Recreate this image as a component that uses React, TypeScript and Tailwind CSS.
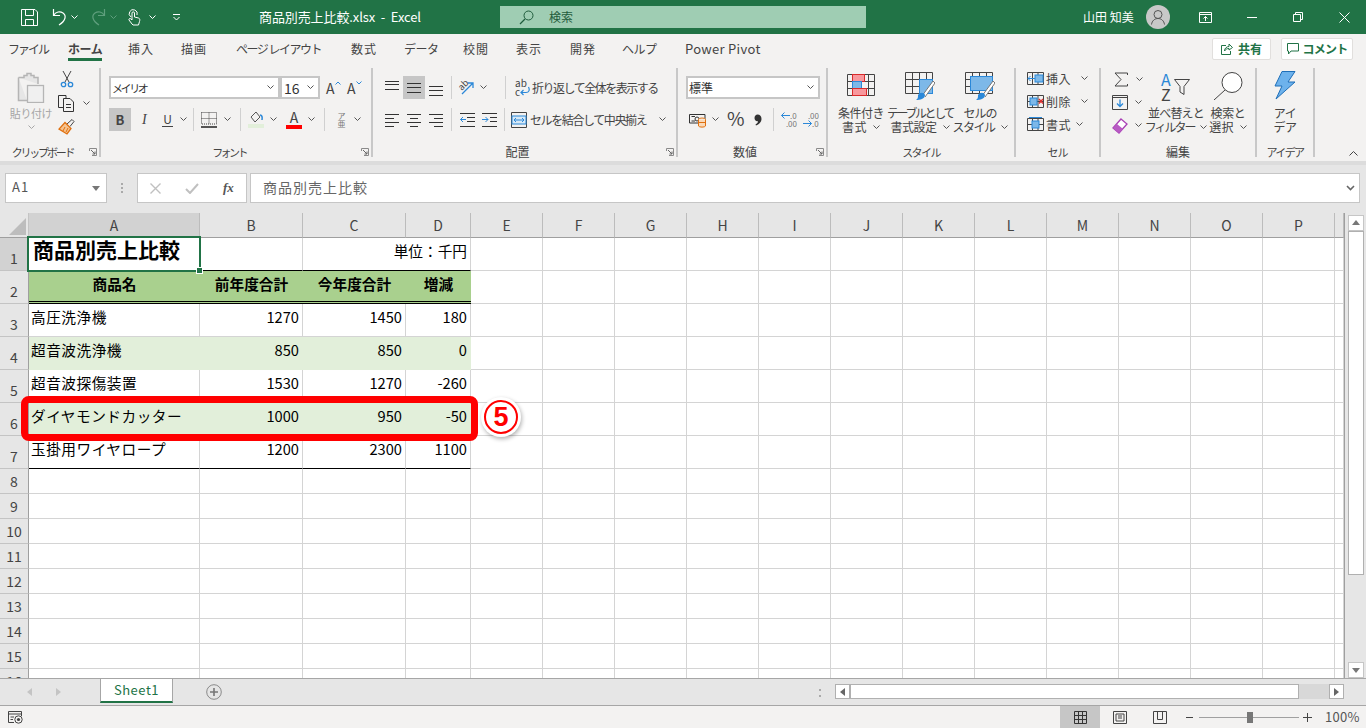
import React from "react";

type P = { className?: string };
const S = ({ w, h, className, children }: { w: number; h: number; className?: string; children: React.ReactNode }) => (
  <svg width={w} height={h} viewBox={`0 0 ${w} ${h}`} fill="none" className={`block shrink-0 ${className ?? ""}`}>
    {children}
  </svg>
);
const B = "#2b88d8";

const Chev = ({ className, color = "#555555" }: P & { color?: string }) => (
  <S w={7} h={5} className={className}>
    <path d="M0.5 0.5 L3.5 3.5 L6.5 0.5" stroke={color} />
  </S>
);

const Lines = ({ ys }: { ys: [number, number, number][] }) => (
  <S w={15} h={16}>
    {ys.map(([y, a, b], i) => (
      <path key={i} d={`M${a} ${y + 0.5} H${b}`} stroke="#333333" />
    ))}
  </S>
);

const Group = ({ className, label, labelClass, launcher, children }: { className: string; label: string; labelClass: string; launcher?: boolean; children: React.ReactNode }) => (
  <div className={`relative mt-[4px] flex h-[89px] shrink-0 flex-col border-r-2 border-[#c8c8c8] ${className}`}>
    <div className="h-[76px]">{children}</div>
    <div className={`h-[13px] text-center leading-[16px] text-[#444444] ${labelClass} ${launcher ? "pr-[14px]" : ""}`}>{label}</div>
    {launcher && (
      <div className="absolute bottom-[1px] right-[2px]">
        <S w={8} h={8}>
          <path d="M0.5 3 V0.5 H7.5 V7.5 H3" stroke="#8a8a8a" />
          <path d="M2 2 L6 6 M6 3.5 V6 H3.5" stroke="#666666" />
        </S>
      </div>
    )}
  </div>
);

const BigText = ({ a, b, ca, cb, chev = true }: { a: string; b: string; ca?: string; cb?: string; chev?: boolean }) => (
  <div className="mt-[6px] flex flex-col items-center text-[12px] leading-[14px] text-[#444444]">
    <div className={`whitespace-nowrap ${ca ?? ""}`}>{a}</div>
    <div className="flex items-center whitespace-nowrap">
      <span className={cb ?? ""}>{b}</span>
      {chev && <Chev className="ml-[6px]" />}
    </div>
  </div>
);

const tabs: [string, string][] = [
  ["ファイル", "w-[60px] tracking-[-2px]"],
  ["ホーム", "w-[60px] font-bold tracking-[-0.5px] text-[#217346]"],
  ["挿入", "w-[53px] tracking-[1px]"],
  ["描画", "w-[55px] tracking-[1px]"],
  ["ページ レイアウト", "w-[115px] tracking-[-1.5px]"],
  ["数式", "w-[53px] tracking-[1px]"],
  ["データ", "w-[59px] tracking-[-0.5px]"],
  ["校閲", "w-[53px] tracking-[1px]"],
  ["表示", "w-[54px] tracking-[1px]"],
  ["開発", "w-[52px] tracking-[1px]"],
  ["ヘルプ", "w-[63px] tracking-[-0.5px]"],
  ["Power Pivot", "w-[80px] tracking-[0.3px] text-[13px]"],
];

function TitleBar() {
  return (
    <div className="flex h-[34px] items-center bg-[#217346] text-white">
      <S w={17} h={17} className="ml-[21px]">
        <path d="M0.5 0.5 H14 L16.5 3 V16.5 H0.5 Z M4.5 0.5 V6.5 H12.5 V0.5 M4.5 16.5 V10.5 H12.5 V16.5" stroke="#fff" />
      </S>
      <S w={17} h={18} className="ml-[13px]">
        <path d="M2.5 1 V7.5 H9 M2.5 7.5 C5 3.5 9 3 12 5 C15.5 7.5 15 12.5 8 17" stroke="#fff" strokeWidth="1.2" />
      </S>
      <Chev className="ml-[3px]" color="#fff" />
      <S w={17} h={18} className="ml-[12px]">
        <path d="M14.5 1 V7.5 H8 M14.5 7.5 C12 3.5 8 3 5 5 C1.5 7.5 2 12.5 9 17" stroke="#5f9f7d" strokeWidth="1.2" />
      </S>
      <Chev className="ml-[3px]" color="#5f9f7d" />
      <S w={14} h={18} className="ml-[10px]">
        <path d="M4 9 A4 4 0 1 1 10 7 M5 16 L2 12 C1.5 10.5 3 10 4 11 L5 12 V5 C5 3.5 7.5 3.5 7.5 5 V9 L11.5 10 C13 10.5 13 12 12.5 13.5 L11.5 17 H6 Z" stroke="#fff" />
      </S>
      <Chev className="ml-[8px]" color="#fff" />
      <S w={7} h={7} className="ml-[17px]">
        <path d="M0 0.5 H7 M0.5 3 L3.5 6 L6.5 3" stroke="#fff" />
      </S>
      <div className="ml-[79px] w-[241px] whitespace-pre text-[13px] leading-[18px] tracking-[-0.1px]">商品別売上比較.xlsx  -  Excel</div>
      <div className="flex h-[22px] w-[366px] items-center bg-[#9fcdb3] text-[#1f5c3c]">
        <S w={15} h={15} className="ml-[19px]">
          <circle cx="9.5" cy="5.5" r="4.5" stroke="#1f5c3c" />
          <path d="M6 9 L1 14" stroke="#1f5c3c" strokeWidth="1.2" />
        </S>
        <span className="ml-[15px] text-[12px] leading-[16px]">検索</span>
      </div>
      <div className="ml-[217px] w-[63px] whitespace-pre text-[12px] leading-[16px]">山田 知美</div>
      <div className="flex h-[24px] w-[24px] items-center justify-center rounded-full bg-[#c8c8c8]">
        <S w={16} h={16}>
          <circle cx="8" cy="5.5" r="4" stroke="#555" />
          <path d="M1.5 15.5 C2 11.5 5 9.5 8 9.5 C11 9.5 14 11.5 14.5 15.5" stroke="#555" />
        </S>
      </div>
      <S w={13} h={11} className="ml-[29px]">
        <path d="M0.5 0.5 H12.5 V10.5 H0.5 Z M0.5 2.5 H12.5 M6.5 9 V4.5 M4.5 6.5 L6.5 4.5 L8.5 6.5" stroke="#fff" />
      </S>
      <S w={10} h={1} className="ml-[35px]">
        <path d="M0 0.5 H10" stroke="#fff" />
      </S>
      <S w={10} h={10} className="ml-[36px]">
        <path d="M0.5 2.5 H7.5 V9.5 H0.5 Z M2.5 2.5 V0.5 H9.5 V7.5 H7.5" stroke="#fff" />
      </S>
      <S w={11} h={11} className="ml-[36px]">
        <path d="M0.5 0.5 L10.5 10.5 M10.5 0.5 L0.5 10.5" stroke="#fff" />
      </S>
    </div>
  );
}

function TabRow() {
  return (
    <div className="flex h-[30px] items-start bg-[#f3f2f1] pl-[8px]">
      {tabs.map(([t, c]) => (
        <div key={t} className={`h-[27px] whitespace-pre pt-[7px] text-[12px] leading-[16px] text-[#444444] ${c}`}>
          {t === "ホーム" ? (
            <span className="inline-block h-[20px] w-[34px] border-b-[3px] border-[#217346]">{t}</span>
          ) : (
            t
          )}
        </div>
      ))}
      <div className="ml-auto mr-[13px] mt-[4px] flex gap-[10px]">
        <div className="flex h-[22px] w-[59px] items-center justify-center gap-[5px] rounded-[2px] border border-[#e1dfdd] bg-white text-[12px] font-bold leading-[16px] text-[#217346]">
          <S w={12} h={12}>
            <path d="M5 2.5 H0.5 V11.5 H9.5 V8 M3.5 8 C3.5 5 6 3.5 8 3.5 V1 L11.5 4.5 L8 7 V5.5 C6 5.5 5 6 3.5 8 Z" stroke="#217346" />
          </S>
          共有
        </div>
        <div className="flex h-[22px] w-[72px] items-center justify-center gap-[4px] rounded-[2px] border border-[#e1dfdd] bg-white text-[12px] font-bold leading-[16px] tracking-[-0.8px] text-[#217346]">
          <S w={12} h={12}>
            <path d="M0.5 0.5 H11.5 V8 H4 L1.5 11 V8 H0.5 Z" stroke="#217346" />
          </S>
          コメント
        </div>
      </div>
    </div>
  );
}

const Combo = ({ text, className }: { text: string; className: string }) => (
  <div className={`flex h-[23px] items-center justify-between border-2 border-[#c6c6c6] bg-white pl-[1px] pr-[4px] leading-[16px] text-[#333333] ${className}`}>
    <span>{text}</span>
    <Chev />
  </div>
);

const Sep = ({ className }: P) => <div className={`h-[23px] w-[1px] bg-[#d0d0d0] ${className ?? ""}`} />;

function Clipboard() {
  return (
    <div className="flex">
      <div className="ml-[6px] flex w-[50px] flex-col items-center">
        <S w={28} h={31} className="mt-[4px]">
          <path d="M1.5 5.5 H7 V3.5 H10 V1.5 H14 V3.5 H17 V5.5 H21 V12 M1.5 5.5 V28.5 H10" stroke="#b5b5b5" strokeWidth="1.5" fill="#e6e6e6" />
          <rect x="10.5" y="13.5" width="16" height="17" fill="#f0f0f0" stroke="#b5b5b5" strokeWidth="1.3" />
        </S>
        <div className="mt-[2px] whitespace-nowrap text-[11px] leading-[16px] tracking-[-0.4px] text-[#a6a6a6]">貼り付け</div>
        <Chev className="mt-[4px]" color="#a6a6a6" />
      </div>
      <div className="ml-[2px] flex flex-col">
        <S w={14} h={17} className="ml-[2px] mt-[3px]">
          <path d="M3 0 L9 11 M11 0 L5 11" stroke="#444" />
          <circle cx="3.5" cy="13.5" r="2.2" stroke={B} strokeWidth="1.3" />
          <circle cx="10.5" cy="13.5" r="2.2" stroke={B} strokeWidth="1.3" />
        </S>
        <div className="mt-[7px] flex items-center">
          <S w={17} h={17}>
            <path d="M5 12.5 H0.5 V0.5 H8 V3" stroke="#333" />
            <path d="M5.5 3.5 H12 L15.5 7 V16.5 H5.5 Z M8 9.5 H13 M8 12.5 H13" stroke="#333" />
          </S>
          <Chev className="ml-[8px]" />
        </div>
        <S w={17} h={16} className="mt-[7px]">
          <path d="M9 5 L14 0.5 L16 2.5 L12 7.5" stroke="#444" />
          <path d="M7 3.5 L13 9.5 L9 15 L1 10 Z" fill="#f6c38f" stroke="#e0700f" strokeWidth="1.3" />
          <path d="M5 12 L7 8 M8 13 L10 9" stroke="#e0700f" />
        </S>
      </div>
    </div>
  );
}

function FontGroup() {
  return (
    <div className="flex flex-col pl-[8px] pt-[8px]">
      <div className="flex items-center">
        <Combo text="メイリオ" className="w-[171px] text-[11px] tracking-[-2.4px]" />
        <Combo text="16" className="w-[40px] pl-[2px] text-[14px]" />
        <div className="ml-[6px] flex w-[21px] items-start text-[14px] leading-[18px] text-[#444444]">
          A
          <S w={6} h={4} className="mt-[2px]">
            <path d="M0.5 3.5 L3 1 L5.5 3.5" stroke={B} />
          </S>
        </div>
        <div className="flex w-[20px] items-start text-[14px] leading-[18px] text-[#444444]">
          A
          <S w={6} h={4} className="mt-[2px]">
            <path d="M0.5 0.5 L3 3 L5.5 0.5" stroke={B} />
          </S>
        </div>
      </div>
      <div className="mt-[9px] flex h-[23px] items-center text-[#444444]">
        <div className="flex h-[23px] w-[22px] items-center justify-center bg-[#c6c6c6] text-[13px] font-bold leading-[16px]">B</div>
        <div className="ml-[11px] w-[10px] font-['Liberation_Serif',serif] text-[14px] italic leading-[16px]">I</div>
        <div className="ml-[10px] w-[11px] border-b border-[#444444] text-center text-[12px] leading-[14px]">U</div>
        <Chev className="ml-[7px]" />
        <Sep className="ml-[6px]" />
        <S w={16} h={16} className="ml-[7px]">
          <path d="M0.5 0.5 H15.5 V12 H0.5 Z M8 0.5 V12 M0.5 6.5 H15.5" stroke="#444" strokeDasharray="1 1" />
          <path d="M0 15 H16" stroke="#111" strokeWidth="1.4" />
        </S>
        <Chev className="ml-[7px]" />
        <Sep className="ml-[9px]" />
        <div className="ml-[7px] flex w-[16px] flex-col">
          <S w={16} h={12}>
            <path d="M3 6 L8 1 L12 6 L7 11 Z" stroke="#555" />
            <path d="M12 4 C14 4 14.5 6 14 9" stroke={B} strokeWidth="1.5" />
          </S>
          <div className="mt-[1px] h-[4px] bg-[#e2efda]" />
        </div>
        <Chev className="ml-[6px]" />
        <div className="ml-[9px] flex w-[16px] flex-col items-center">
          <span className="text-[14px] leading-[13px]">A</span>
          <div className="mt-[1px] h-[4px] w-[16px] bg-[#ff0000]" />
        </div>
        <Chev className="ml-[6px]" />
        <Sep className="ml-[9px]" />
        <div className="ml-[11px] flex w-[11px] flex-col items-center text-[8px] leading-[8px] text-[#777777]">
          <span>ア</span>
          <span>亜</span>
        </div>
        <Chev className="ml-[7px]" />
      </div>
    </div>
  );
}

function AlignGroup() {
  return (
    <div className="flex flex-col pl-[12px] pt-[8px]">
      <div className="flex h-[23px] items-center">
        <Lines ys={[[1, 0, 14], [4, 0, 14], [9, 0, 14]]} />
        <div className="ml-[3px] flex h-[23px] w-[22px] items-center justify-center bg-[#c6c6c6]">
          <Lines ys={[[3, 0, 14], [7, 0, 14], [12, 0, 14]]} />
        </div>
        <div className="ml-[4px]">
          <Lines ys={[[6, 0, 14], [10, 0, 14], [15, 0, 14]]} />
        </div>
        <Sep className="ml-[7px]" />
        <div className="relative ml-[7px] h-[16px] w-[16px]">
          <span className="absolute -left-[1px] -top-[1px] -rotate-45 text-[9px] leading-[12px] text-[#444444]">ab</span>
          <S w={16} h={16}>
            <path d="M3 14 L14 3 M9 3 H14 V8" stroke={B} strokeWidth="1.3" />
          </S>
        </div>
        <Chev className="ml-[5px]" />
        <Sep className="ml-[18px]" />
        <div className="relative ml-[9px] h-[17px] w-[15px]">
          <span className="absolute left-[0px] -top-[2px] text-[10px] leading-[11px] text-[#444444]">ab</span>
          <span className="absolute left-[0px] top-[7px] text-[10px] leading-[11px] text-[#444444]">c</span>
          <S w={15} h={17}>
            <path d="M13.5 8 C15 11 14 13.5 11 13.5 H6 M8.5 11 L6 13.5 L8.5 16" stroke={B} strokeWidth="1.2" />
          </S>
        </div>
        <span className="ml-[2px] whitespace-nowrap text-[12px] leading-[16px] tracking-[-1.5px] text-[#444444]">折り返して全体を表示する</span>
      </div>
      <div className="mt-[9px] flex h-[23px] items-center">
        <Lines ys={[[2, 0, 14], [6, 0, 9], [10, 0, 14], [14, 0, 9]]} />
        <div className="ml-[7px]">
          <Lines ys={[[2, 0, 14], [6, 3, 11], [10, 0, 14], [14, 3, 11]]} />
        </div>
        <div className="ml-[7px]">
          <Lines ys={[[2, 0, 14], [6, 5, 14], [10, 0, 14], [14, 5, 14]]} />
        </div>
        <Sep className="ml-[7px]" />
        <S w={15} h={14} className="ml-[8px]">
          <path d="M0 0.5 H15 M7 4.5 H15 M7 8.5 H15 M0 13.5 H15" stroke="#333" />
          <path d="M0.5 6.5 H6 M3 4 L0.5 6.5 L3 9" stroke={B} />
        </S>
        <S w={15} h={14} className="ml-[7px]">
          <path d="M0 0.5 H15 M8 4.5 H15 M8 8.5 H15 M0 13.5 H15" stroke="#333" />
          <path d="M0 6.5 H6 M3.5 4 L6 6.5 L3.5 9" stroke={B} />
        </S>
        <Sep className="ml-[7px]" />
        <S w={16} h={16} className="ml-[6px]">
          <path d="M0.5 0.5 H15.5 V15.5 H0.5 Z" stroke="#444" />
          <rect x="1" y="4" width="14" height="8" fill="#d7e9f7" stroke={B} />
          <path d="M3 8 H13 M5 6 L3 8 L5 10 M11 6 L13 8 L11 10" stroke={B} />
        </S>
        <span className="ml-[3px] w-[122px] whitespace-nowrap text-[12px] leading-[16px] tracking-[-1.4px] text-[#444444]">セルを結合して中央揃え</span>
        <Chev className="ml-[7px]" />
      </div>
    </div>
  );
}

function NumberGroup() {
  return (
    <div className="flex flex-col pl-[8px] pt-[8px]">
      <Combo text="標準" className="w-[134px] text-[12px]" />
      <div className="mt-[9px] flex h-[23px] items-center text-[#444444]">
        <S w={18} h={17} className="ml-[3px]">
          <path d="M0.5 3.5 H16 V12 H0.5 Z M2.5 5.5 H6 M2.5 10 H6" stroke="#333" />
          <circle cx="8" cy="8" r="2" stroke="#333" />
          <ellipse cx="13" cy="8.5" rx="3.5" ry="1.5" fill="#f3f2f1" stroke="#e0700f" />
          <path d="M9.5 8.5 V15 C10 16.5 16 16.5 16.5 15 V8.5 M9.5 11.5 H16.5" stroke="#e0700f" fill="#f9d9b8" />
        </S>
        <Chev className="ml-[5px]" />
        <span className="ml-[8px] w-[17px] pb-[4px] text-[19px] leading-[22px]">%</span>
        <S w={8} h={12} className="ml-[10px]">
          <path d="M3.5 0.5 C6 0.5 7.5 2 7.5 5 C7.5 8 5 10.5 2 11.5 L1.5 10.5 C3 9.5 4 8.5 4 7.2 C2 7.7 0.5 6.2 0.5 4 C0.5 2 2 0.5 3.5 0.5 Z" fill="#333" />
        </S>
        <Sep className="ml-[11px]" />
        <div className="ml-[7px] flex w-[16px] flex-col">
          <div className="flex items-center text-[8px] leading-[8px] text-[#777777]">
            <S w={9} h={7}>
              <path d="M0.5 3.5 H9 M3.5 0.5 L0.5 3.5 L3.5 6.5" stroke={B} />
            </S>
            <span>.0</span>
          </div>
          <div className="text-right text-[8px] leading-[8px] text-[#777777]">.00</div>
        </div>
        <div className="ml-[6px] flex w-[16px] flex-col">
          <div className="text-right text-[8px] leading-[8px] text-[#777777]">.00</div>
          <div className="flex items-center text-[8px] leading-[8px] text-[#777777]">
            <S w={9} h={7}>
              <path d="M0 3.5 H8.5 M5.5 0.5 L8.5 3.5 L5.5 6.5" stroke={B} />
            </S>
            <span>.0</span>
          </div>
        </div>
      </div>
    </div>
  );
}

const GridLines = () => <path d="M0.5 0.5 H27.5 V21.5 H0.5 Z M0.5 7.5 H27.5 M0.5 14.5 H27.5 M7.5 0.5 V21.5 M14.5 0.5 V21.5 M21.5 0.5 V21.5" stroke="#444" />;
const Brush = () => (
  <>
    <path d="M17 24 L28 9 L30 11 L20 25" fill="#fff" stroke="#777" />
    <path d="M13 23 C15 20 19 20 20 23 C20 27 15 28 11 28 C13 27 13 25 13 23 Z" fill={B} />
  </>
);

function StyleGroup() {
  return (
    <div className="flex pl-[5px]">
      <div className="flex w-[56px] flex-col items-center">
        <S w={28} h={28} className="mt-[4px]">
          <g transform="translate(0 2)">
            <GridLines />
            <rect x="5.5" y="0.5" width="12" height="7" fill="#f8989d" stroke="#d92b2b" />
            <rect x="5.5" y="7.5" width="9" height="7" fill="#7db8e8" stroke={B} />
            <rect x="5.5" y="14.5" width="14" height="7" fill="#f8989d" stroke="#d92b2b" />
          </g>
        </S>
        <BigText a="条件付き" b="書式" ca="tracking-[-0.5px]" cb="tracking-[0.5px]" />
      </div>
      <div className="flex w-[62px] flex-col items-center">
        <S w={30} h={28} className="mt-[4px]">
          <GridLines />
          <rect x="14.5" y="7.5" width="13" height="14" fill="#7db8e8" stroke={B} />
          <Brush />
        </S>
        <BigText a="テーブルとして" b="書式設定" ca="tracking-[-2.4px]" cb="tracking-[-0.5px]" />
      </div>
      <div className="flex w-[58px] flex-col items-center">
        <S w={30} h={28} className="mt-[4px]">
          <GridLines />
          <rect x="5.5" y="4.5" width="22" height="14" fill="#7db8e8" stroke={B} />
          <Brush />
        </S>
        <BigText a="セルの" b="スタイル" ca="tracking-[-1px]" cb="tracking-[-1.5px]" />
      </div>
    </div>
  );
}

const SmallGrid = ({ kind }: { kind: string }) => (
  <S w={17} h={15}>
    <path d="M0.5 1.5 H16.5 V13.5 H0.5 Z M0.5 7.5 H16.5 M5.5 1.5 V13.5 M11 1.5 V13.5" stroke="#444" />
    {kind === "ins" && (
      <>
        <rect x="8" y="4" width="8" height="7" fill="#7db8e8" stroke={B} />
        <path d="M1 7.5 H8 M3.5 5 L1 7.5 L3.5 10" stroke={B} fill="#f3f2f1" />
      </>
    )}
    {kind === "del" && (
      <>
        <rect x="3" y="4" width="7" height="7" fill="#7db8e8" stroke={B} />
        <path d="M12 5 L16 9.5 M16 5 L12 9.5" stroke="#e03030" strokeWidth="1.3" />
      </>
    )}
    {kind === "fmt" && (
      <>
        <rect x="5" y="4" width="7" height="7" fill="#7db8e8" stroke={B} />
        <path d="M2 0.5 H15" stroke={B} />
      </>
    )}
  </S>
);

function CellsGroup() {
  const rows: [string, string, string][] = [
    ["ins", "挿入", "ml-[9px]"],
    ["del", "削除", "ml-[9px]"],
    ["fmt", "書式", "ml-[4px]"],
  ];
  return (
    <div className="-mt-[1px] flex flex-col pl-[11px]">
      {rows.map(([k, t, m]) => (
        <div key={k} className="flex h-[23px] items-center">
          <SmallGrid kind={k} />
          <span className="ml-[2px] w-[26px] whitespace-nowrap text-[12px] leading-[16px] tracking-[0.5px] text-[#444444]">{t}</span>
          <Chev className={m} />
        </div>
      ))}
    </div>
  );
}

function EditGroup() {
  return (
    <div className="flex">
      <div className="flex w-[47px] shrink-0 flex-col pl-[11px]">
        <div className="flex h-[23px] items-center">
          <S w={15} h={15} className="ml-[2px]">
            <path d="M13.5 3 V1 H1 L7 7.5 L1 14 H13.5 V12" stroke="#444" />
          </S>
          <Chev className="ml-[7px]" />
        </div>
        <div className="flex h-[23px] items-center">
          <S w={16} h={15}>
            <path d="M0.5 0.5 H15.5 V14.5 H0.5 Z M0.5 2.5 H15.5" stroke="#444" />
            <path d="M8 4.5 V11.5 M5 8.5 L8 11.5 L11 8.5" stroke={B} strokeWidth="1.3" />
          </S>
          <Chev className="ml-[7px]" />
        </div>
        <div className="flex h-[23px] items-center">
          <S w={16} h={16}>
            <path d="M9 1 L15 6 L7 15 L1 10 Z" fill="#fff" stroke="#a93fb5" strokeWidth="1.3" />
            <path d="M1 10 L5 6 L11 11 L7 15 Z" fill="#b85ac4" />
          </S>
          <Chev className="ml-[7px]" />
        </div>
      </div>
      <div className="flex w-[56px] shrink-0 flex-col items-center">
        <div className="mt-[4px] flex h-[28px] w-[30px]">
          <div className="flex w-[13px] flex-col text-[16px] leading-[15px]">
            <span className="text-[#2b88d8]">A</span>
            <span className="text-[#444444]">Z</span>
          </div>
          <S w={17} h={18} className="mt-[7px]">
            <path d="M0.5 0.5 H15.5 L10 7.5 V15.5 L6 13 V7.5 Z" stroke="#444" />
          </S>
        </div>
        <BigText a="並べ替えと" b="フィルター" ca="tracking-[-0.8px]" cb="tracking-[-2px]" />
      </div>
      <div className="flex w-[48px] shrink-0 flex-col items-center">
        <S w={30} h={28} className="mt-[4px]">
          <circle cx="19" cy="10.5" r="10" stroke="#444" fill="#fff" />
          <path d="M12 18 L1 28" stroke="#444" />
        </S>
        <BigText a="検索と" b="選択" ca="tracking-[-0.3px]" cb="tracking-[0.3px]" />
      </div>
    </div>
  );
}

function Ribbon() {
  return (
    <div className="flex h-[97px] bg-[#f3f2f1]">
      <Group className="w-[101px]" label="クリップボード" labelClass="text-[11px] tracking-[-2.2px]" launcher>
        <Clipboard />
      </Group>
      <Group className="w-[272px]" label="フォント" labelClass="text-[11px] tracking-[-2.6px]" launcher>
        <FontGroup />
      </Group>
      <Group className="w-[305px]" label="配置" labelClass="text-[12px]" launcher>
        <AlignGroup />
      </Group>
      <Group className="w-[150px]" label="数値" labelClass="text-[12px]" launcher>
        <NumberGroup />
      </Group>
      <Group className="w-[188px]" label="スタイル" labelClass="text-[11px] tracking-[-1.6px]">
        <StyleGroup />
      </Group>
      <Group className="w-[85px]" label="セル" labelClass="text-[11px] tracking-[-1px]">
        <CellsGroup />
      </Group>
      <Group className="w-[156px]" label="編集" labelClass="text-[12px]">
        <EditGroup />
      </Group>
      <Group className="w-[58px]" label="アイデア" labelClass="text-[11px] tracking-[-1.6px]">
        <div className="flex flex-col items-center">
          <S w={22} h={29} className="mt-[3px]">
            <path d="M8 0.5 H21 L14 11 H21 L2 28 L8 15 H1 Z" fill="#6db2ec" stroke="#1f6fb8" />
          </S>
          <BigText a="アイ" b="デア" ca="tracking-[-0.5px]" cb="tracking-[-0.5px]" chev={false} />
        </div>
      </Group>
      <div className="ml-[34px] mt-[87px]">
        <S w={9} h={5}>
          <path d="M0.5 4.5 L4.5 0.5 L8.5 4.5" stroke="#444" />
        </S>
      </div>
    </div>
  );
}

function FormulaBar() {
  return (
    <div className="flex h-[48px] bg-[#e6e6e6] pt-[8px]">
      <div className="ml-[5px] flex h-[30px] w-[102px] items-center justify-between border border-[#c6c6c6] bg-white pl-[6px] pr-[6px] text-[13px] leading-[18px] tracking-[1px] text-[#555555]">
        <span className="pb-[2px]">A1</span>
        <S w={8} h={5}>
          <path d="M0 0 H8 L4 5 Z" fill="#777" />
        </S>
      </div>
      <div className="ml-[14px] mt-[10px] flex h-[10px] w-[2px] flex-col justify-between">
        <div className="h-[2px] w-[2px] bg-[#aaaaaa]" />
        <div className="h-[2px] w-[2px] bg-[#aaaaaa]" />
        <div className="h-[2px] w-[2px] bg-[#aaaaaa]" />
      </div>
      <div className="ml-[14px] flex h-[30px] w-[110px] items-center border border-[#c6c6c6] bg-white">
        <S w={11} h={11} className="ml-[12px]">
          <path d="M0.5 0.5 L10.5 10.5 M10.5 0.5 L0.5 10.5" stroke="#c0c0c0" strokeWidth="1.4" />
        </S>
        <S w={14} h={11} className="ml-[24px]">
          <path d="M1 6 L5 10 L13 1" stroke="#c0c0c0" strokeWidth="2" />
        </S>
        <span className="ml-[24px] font-['Liberation_Serif',serif] text-[13px] font-bold italic leading-[16px] text-[#555555]">fx</span>
      </div>
      <div className="ml-[3px] flex h-[30px] w-[1110px] items-center justify-between border border-[#c6c6c6] bg-white pl-[12px] pr-[4px] text-[14px] leading-[18px] tracking-[1px] text-[#666666]">
        <span className="pb-[2px]">商品別売上比較</span>
        <S w={9} h={6}>
          <path d="M1 1 L4.5 4.5 L8 1" stroke="#666" strokeWidth="1.6" />
        </S>
      </div>
    </div>
  );
}

const COLS = ["A", "B", "C", "D", "E", "F", "G", "H", "I", "J", "K", "L", "M", "N", "O", "P", ""];
const DATA: [string, string, string, string][] = [
  ["高圧洗浄機", "1270", "1450", "180"],
  ["超音波洗浄機", "850", "850", "0"],
  ["超音波探傷装置", "1530", "1270", "-260"],
  ["ダイヤモンドカッター", "1000", "950", "-50"],
  ["玉掛用ワイヤロープ", "1200", "2300", "1100"],
];
const blank = "border-b border-r border-[#d4d4d4] bg-white";
const rowHead = "flex items-center justify-center border-b border-r border-b-[#c4c4c4] border-r-[#9f9f9f] text-[14px] leading-[18px] text-[#444444]";

function Sheet() {
  const cells: React.ReactNode[] = [];
  cells.push(
    <div key="corner" className="flex items-end justify-end border-b border-r border-b-[#9f9f9f] border-r-[#c4c4c4] bg-[#e6e6e6] pb-[2px] pr-[2px]">
      <S w={17} h={17}>
        <path d="M17 0 V17 H0 Z" fill="#bdbdbd" />
      </S>
    </div>
  );
  COLS.forEach((c, i) =>
    cells.push(
      <div
        key={"h" + i}
        className={`flex items-center justify-center border-b border-r border-b-[#9f9f9f] border-r-[#bcbcbc] text-[14px] leading-[18px] text-[#444444] ${i === 0 ? "bg-[#d2d2d2]" : "bg-[#e6e6e6]"}`}
      >
        {c}
      </div>
    )
  );
  const rest = (r: number, from = 4) => {
    for (let i = from; i < COLS.length; i++) cells.push(<div key={`c${r}-${i}`} className={blank} />);
  };
  const head = (n: number, active = false) =>
    cells.push(
      <div key={"r" + n} className={`${rowHead} ${active ? "bg-[#d2d2d2]" : "bg-[#e6e6e6]"} ${n <= 7 ? "pt-[7px]" : "pb-[1px]"}`}>
        {n}
      </div>
    );

  // Row 1
  head(1, true);
  cells.push(
    <div key="a1" className="relative flex items-center whitespace-nowrap border-b border-r border-b-[#000000] border-r-[#d4d4d4] bg-white pb-[10px] pl-[4px] text-[21px] font-bold leading-[28px] text-black">
      商品別売上比較
      <div className="absolute -left-[2px] -top-[2px] bottom-[-2px] right-[-2px] border-2 border-[#217346]">
        <div className="absolute -bottom-[4px] -right-[4px] h-[7px] w-[7px] border border-white bg-[#217346]" />
      </div>
    </div>
  );
  cells.push(<div key="b1" className="border-b border-r border-b-black border-r-[#d4d4d4] bg-white" />);
  cells.push(
    <div key="c1" className="col-span-2 flex items-center justify-end border-b border-r border-b-black border-r-[#d4d4d4] bg-white pb-[7px] pr-[3px] text-[14.67px] leading-[20px] text-black">
      単位：千円
    </div>
  );
  rest(1);

  // Row 2
  head(2);
  ["商品名", "前年度合計", "今年度合計", "増減"].forEach((t) =>
    cells.push(
      <div key={t} className="flex items-center justify-center border-b-[3px] border-double border-black bg-[#a9d08e] pb-[4px] text-[14.67px] font-bold leading-[20px] text-black">
        {t}
      </div>
    )
  );
  rest(2);

  // Rows 3-7
  DATA.forEach((row, idx) => {
    const n = idx + 3;
    const tinted = n === 4 || n === 6;
    const last = n === 7;
    head(n);
    row.forEach((t, ci) =>
      cells.push(
        <div
          key={`${n}-${ci}`}
          className={`flex items-center whitespace-nowrap border-b border-r pb-[7px] text-[14.67px] leading-[20px] text-black ${
            ci === 0 ? "pl-[2px] tracking-[0.5px]" : "justify-end pr-[3px]"
          } ${tinted ? "border-transparent bg-[#e2efda]" : "border-r-[#d4d4d4] bg-white"} ${
            last ? "border-b-black" : tinted ? "" : "border-b-[#d4d4d4]"
          }`}
        >
          {t}
        </div>
      )
    );
    rest(n);
  });

  // Rows 8-16
  for (let n = 8; n <= 16; n++) {
    head(n);
    rest(n, 0);
  }

  return (
    <div className="relative flex h-[465px]">
      <div className="h-[465px] w-[1345px] overflow-hidden border-r border-[#9f9f9f] bg-white">
        <div className="grid grid-cols-[29px_171px_103px_103px_65px_repeat(12,72px)_9px] grid-rows-[25px_repeat(7,33px)_repeat(9,25px)]">{cells}</div>
      </div>
      <div className="flex h-[465px] w-[21px] flex-col items-start bg-[#e6e6e6] pl-[3px]">
        <div className="mt-[2px] flex h-[16px] w-[16px] items-center justify-center border border-[#c6c6c6] bg-white">
          <S w={8} h={5}>
            <path d="M4 0 L8 5 H0 Z" fill="#777" />
          </S>
        </div>
        <div className="h-[346px] w-[16px] border border-[#b0b0b0] bg-white" />
        <div className="mt-[87px] flex h-[16px] w-[16px] items-center justify-center border border-[#c6c6c6] bg-white">
          <S w={8} h={5}>
            <path d="M0 0 H8 L4 5 Z" fill="#777" />
          </S>
        </div>
      </div>

      {/* highlight over row 6 */}
      <div className="absolute left-[21px] top-[183px] h-[45px] w-[457px] rounded-[8px] border-[7px] border-[#ff0000]" />
      <div className="absolute left-[481px] top-[184px] flex h-[40px] w-[40px] items-center justify-center rounded-full bg-white shadow-[1px_2px_4px_rgba(0,0,0,0.3)]">
        <div className="flex h-[34px] w-[34px] items-center justify-center rounded-full border-2 border-[#ff0000] font-['Liberation_Sans',sans-serif] text-[27px] font-bold leading-[30px] text-[#ff0000]">5</div>
      </div>
    </div>
  );
}

function SheetTabs() {
  return (
    <div className="flex h-[28px] items-start border-y border-[#a6a6a6] bg-[#e6e6e6]">
      <S w={5} h={8} className="ml-[27px] mt-[9px]">
        <path d="M5 0 V8 L0 4 Z" fill="#c4c4c4" />
      </S>
      <S w={5} h={8} className="ml-[24px] mt-[9px]">
        <path d="M0 0 V8 L5 4 Z" fill="#c4c4c4" />
      </S>
      <div className="ml-[39px] flex h-[24px] w-[73px] items-center justify-center border-x border-b-2 border-x-[#a6a6a6] border-b-[#217346] bg-white text-[13px] leading-[18px] tracking-[0.5px] text-[#217346]">Sheet1</div>
      <S w={16} h={16} className="ml-[33px] mt-[5px]">
        <circle cx="8" cy="8" r="7.3" stroke="#8a8a8a" />
        <path d="M8 4 V12 M4 8 H12" stroke="#777" strokeWidth="1.6" />
      </S>
      <div className="ml-[597px] mt-[10px] flex h-[8px] w-[2px] flex-col justify-between">
        <div className="h-[2px] w-[2px] bg-[#aaaaaa]" />
        <div className="h-[2px] w-[2px] bg-[#aaaaaa]" />
      </div>
      <div className="ml-[14px] mt-[5px] flex h-[15px] w-[509px] bg-[#d8d8d8]">
        <div className="flex h-[15px] w-[15px] items-center justify-center border border-[#b0b0b0] bg-white">
          <S w={5} h={8}>
            <path d="M5 0 V8 L0 4 Z" fill="#666" />
          </S>
        </div>
        <div className="h-[15px] w-[449px] border border-[#b0b0b0] bg-white" />
        <div className="ml-auto flex h-[15px] w-[15px] items-center justify-center border border-[#b0b0b0] bg-white">
          <S w={5} h={8}>
            <path d="M0 0 V8 L5 4 Z" fill="#666" />
          </S>
        </div>
      </div>
    </div>
  );
}

function StatusBar() {
  return (
    <div className="flex h-[22px] items-center bg-[#f3f2f1]">
      <S w={15} h={13} className="ml-[8px]">
        <path d="M0.5 0.5 H13.5 V5 M0.5 0.5 V11.5 H6 M0.5 3 H13.5 M2.5 6 H6 M2.5 8.5 H5" stroke="#444" />
        <circle cx="10.5" cy="8.5" r="3.7" stroke="#444" />
        <circle cx="10.5" cy="8.5" r="1.6" fill="#444" />
      </S>
      <div className="ml-[1037px] flex h-[22px] w-[40px] items-center justify-center bg-[#c6c6c6]">
        <S w={13} h={13}>
          <path d="M0.5 0.5 H12.5 V12.5 H0.5 Z M4.5 0.5 V12.5 M8.5 0.5 V12.5 M0.5 4.5 H12.5 M0.5 8.5 H12.5" stroke="#333" />
        </S>
      </div>
      <S w={14} h={13} className="ml-[13px]">
        <path d="M0.5 0.5 H13.5 V12.5 H0.5 Z M3 3 H11 V10 H3 Z M5 5 H9 M5 7 H9" stroke="#444" />
      </S>
      <S w={14} h={13} className="ml-[26px]">
        <path d="M0.5 0.5 H13.5 V12.5 H0.5 Z M4.5 0.5 V8.5 H9.5 V0.5" stroke="#444" />
      </S>
      <S w={7} h={1} className="ml-[19px]">
        <path d="M0 0.5 H7" stroke="#444" />
      </S>
      <div className="ml-[6px] flex w-[100px] items-center">
        <div className="h-[1px] w-[48px] bg-[#a0a0a0]" />
        <div className="h-[11px] w-[6px] bg-[#777777]" />
        <div className="h-[1px] w-[46px] bg-[#a0a0a0]" />
      </div>
      <S w={9} h={9} className="ml-[4px]">
        <path d="M4.5 0 V9 M0 4.5 H9" stroke="#444" />
      </S>
      <span className="ml-[13px] text-[13px] leading-[18px] tracking-[0.3px] text-[#555555]">100%</span>
    </div>
  );
}

export default function App() {
  return (
    <div className="h-[728px] w-[1366px] overflow-hidden bg-[#f3f2f1] font-['Noto_Sans_CJK_JP','Liberation_Sans',sans-serif]">
      <TitleBar />
      <TabRow />
      <Ribbon />
      <div className="h-[4px] bg-[#dcdcdc]" />
      <FormulaBar />
      <Sheet />
      <SheetTabs />
      <StatusBar />
    </div>
  );
}
